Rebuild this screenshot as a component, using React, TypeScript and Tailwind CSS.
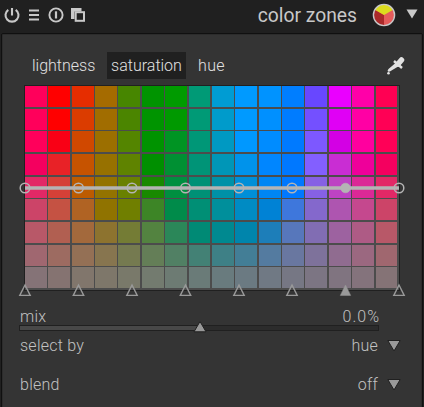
import React from "react";

const rows: string[][] = [
  ["#ff005b", "#ff0000", "#e62d00", "#a56b00", "#478600", "#009400", "#009b00", "#009a76", "#009cd3", "#009aff", "#0093ff", "#007eff", "#6847ff", "#ea00ff", "#ff00a8", "#ff0053"],
  ["#ff005b", "#ff0000", "#db3c00", "#a16d00", "#4b8500", "#009400", "#009900", "#009a76", "#009bcb", "#009aff", "#0090ff", "#007cff", "#7450ff", "#e000f5", "#ff00a4", "#ff0055"],
  ["#ff005b", "#f90015", "#d04800", "#9c6f00", "#548500", "#009300", "#009423", "#009777", "#0099c2", "#0098ff", "#008cff", "#007aff", "#7d58ff", "#d300e4", "#ff009e", "#ff0057"],
  ["#f4005f", "#e82227", "#c65300", "#977100", "#5f8300", "#008f00", "#009033", "#009477", "#0096b7", "#0093eb", "#0086ff", "#0078ff", "#835fff", "#c92dd3", "#ee009a", "#f4005f"],
  ["#e22866", "#d54037", "#bc5b00", "#937300", "#698100", "#188900", "#008f40", "#009176", "#0091a7", "#008fd8", "#0086f4", "#0078ff", "#8661e4", "#bd43c3", "#db2996", "#e22866"],
  ["#cc4468", "#c55243", "#b06323", "#907300", "#707f00", "#3d8526", "#008b4a", "#008f75", "#008f9b", "#008bc3", "#0082d5", "#3e77dc", "#8468cc", "#ae55b0", "#c5488e", "#cc4468"],
  ["#b85868", "#b15f51", "#a3693c", "#8d732f", "#747c35", "#538340", "#2b8759", "#008a75", "#008990", "#0085ac", "#1d7eb9", "#5777bb", "#816db3", "#9d62a0", "#ae5b85", "#b85868"],
  ["#a06770", "#9d6b61", "#947055", "#87754f", "#757a50", "#647e57", "#518064", "#438175", "#3e8086", "#437e96", "#547ba0", "#6977a0", "#7e729b", "#906c90", "#9b6880", "#a0676f"],
  ["#857377", "#857371", "#81766c", "#7e776a", "#79796a", "#737b6f", "#6d7b73", "#6a7b78", "#697b7e", "#6b7a82", "#707984", "#767784", "#7c7583", "#807480", "#84737c", "#857376"],
];

const points = [25, 78.5, 132, 185.5, 239, 292, 345.5, 399];

function Curve() {
  return (
    <svg className="absolute -left-2 -top-px overflow-visible" width="392" height="216" viewBox="17 85 392 216">
      <path d="M25 188H399" stroke="#b4b4b4" strokeWidth="3.4" />
      {points.map((x, i) => (
        <g key={x}>
          <circle cx={x} cy="188" r="4.8" fill={i === 6 ? "#b4b4b4" : "none"} stroke="#b4b4b4" strokeWidth={i === 6 ? "0.6" : "1.5"} />
          <path
            d={`M${x} 285L${x - 5.2} 295.4H${x + 5.2}Z`}
            fill={i === 6 ? "#999" : "none"}
            stroke="#999"
            strokeWidth={i === 6 ? "0.5" : "1.4"}
          />
        </g>
      ))}
    </svg>
  );
}

function Swatches() {
  return (
    <div className="relative ml-[22px] mt-[6px] h-[206px] w-[376px] border border-[#202020] bg-[#4c4c4c]">
      <div className="grid grid-cols-[23px_24px_23px_23px_24px_23px_24px_23px_23px_24px_23px_23px_24px_23px_24px_21px] grid-rows-[23px_22px_23px_23px_22px_23px_23px_22px_21px]">
        {rows.flatMap((row, r) =>
          row.map((color, c) => (
            <div
              key={`${r}-${c}`}
              className={`h-[21px] ${c === 7 || c === 15 ? "w-[21px]" : "w-[22px]"}`}
              style={{ backgroundColor: color }}
            />
          ))
        )}
      </div>
      <Curve />
    </div>
  );
}

function HeaderIcons() {
  return (
    <svg width="90" height="30" viewBox="0 0 90 30" fill="none" stroke="#c8c8c8">
      <path d="M8.3 9.8A6.5 6.5 0 1 0 15.7 9.8M12 8V15.4" strokeWidth="2.1" />
      <path d="M29 10.5H39M29 15H39M29 19.5H39" strokeWidth="2" />
      <circle cx="56" cy="15" r="6.6" strokeWidth="1.9" />
      <path d="M56 11.3V18.5" strokeWidth="2.2" />
      <path d="M71 8H81.5V11.5H74.5V19H71Z" fill="#c8c8c8" stroke="none" />
      <rect x="75.7" y="12.2" width="8.3" height="8.6" fill="#202020" strokeWidth="2" />
    </svg>
  );
}

function Select({ label, value }: { label: string; value: string }) {
  return (
    <div className="flex h-5 items-center pl-[18px] pr-[21px] text-[#c2c2c2]">
      <span className="flex-1">{label}</span>
      <span className="mr-[9px]">{value}</span>
      <svg className="mb-[2px]" width="14" height="13" viewBox="0 0 14 13">
        <path d="M0.8 1.5H13.2L7 12Z" fill="#999" stroke="#202020" />
      </svg>
    </div>
  );
}

export default function App() {
  return (
    <main className="h-[407px] w-[424px] overflow-hidden bg-[#202020] font-['Roboto',sans-serif] text-[16px] font-light leading-5 tracking-[0.25px]">
      <header className="flex h-[33px] items-start text-[#c8c8c8]">
        <HeaderIcons />
        <h1 className="ml-auto mr-[14px] pt-1 text-[19.3px] font-normal leading-6 tracking-[0px]">color zones</h1>
        <svg width="53" height="30" viewBox="371 0 53 30">
          <circle cx="384" cy="15" r="10.6" fill="#e55b5b" />
          <path d="M384 15L374.8 9.8A10.6 10.6 0 0 0 384 25.6Z" fill="#aa2929" />
          <path d="M384 15L374.8 9.8A10.6 10.6 0 0 1 393.2 9.8Z" fill="#dcdc1e" />
          <circle cx="384" cy="15" r="10.6" fill="none" stroke="#c8c8c8" strokeWidth="1.4" />
          <path d="M406.5 9.5H417.5L412 18.5Z" fill="#c8c8c8" />
        </svg>
      </header>
      <section className="ml-px h-[390px] w-[422px] rounded-[2px] border border-[#101010] bg-[#343434] shadow-[inset_0_0_0_1px_#2c2c2c]">
        <nav className="flex h-[45px] items-end pl-[25px] tracking-[0px] text-[#e2e2e2]">
          <span className="flex h-[27px] w-[78px] items-center pl-[5px]">lightness</span>
          <span className="ml-[2px] flex h-[27px] w-[79px] items-center justify-center bg-[#202020]">saturation</span>
          <span className="ml-3 flex h-[27px] flex-1 items-center tracking-[0.35px]">hue</span>
          <svg className="mb-[3px] mr-[16px]" width="20" height="20" viewBox="386 56 20 20">
            <path d="M395.5 63L388.5 69Q387 70.5 388 71.5Q390 72 391.5 70.5L399 66Z" fill="#e2e2e2" />
            <path d="M394 61L402 68" stroke="#e2e2e2" strokeWidth="2.5" />
            <path d="M398 64L401.5 60" stroke="#e2e2e2" strokeWidth="5.5" strokeLinecap="round" />
            <circle cx="388.5" cy="73.3" r="1.3" fill="#e2e2e2" />
          </svg>
        </nav>
        <Swatches />
        <div className="mt-[17px] flex h-[18px] items-center justify-between pl-[18px] pr-[43px] text-[#c2c2c2]">
          <span>mix</span>
          <span className="-mr-px tracking-[1px]">0.0%</span>
        </div>
        <svg className="-mt-[5px] ml-4 block" width="362" height="13" viewBox="18 320 362 13">
          <rect x="19.5" y="324.5" width="359" height="5" fill="#2c2c2c" stroke="#202020" />
          <rect x="20" y="325" width="180" height="4" fill="#484848" />
          <path d="M200 320.5L194 330.8H206Z" fill="#999" stroke="#202020" />
        </svg>
        <div className="mt-[2px] flex flex-col gap-[19px]">
          <Select label="select by" value="hue" />
          <Select label="blend" value="off" />
        </div>
      </section>
    </main>
  );
}
